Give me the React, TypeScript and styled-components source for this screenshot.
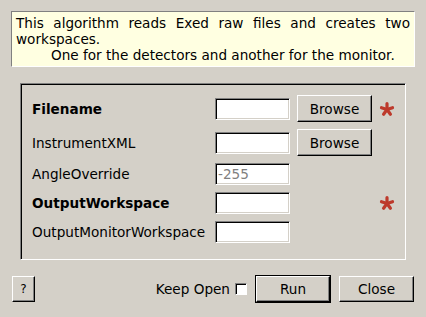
import styled, { createGlobalStyle, css } from 'styled-components'

const GlobalStyle = createGlobalStyle`
    html, body {
        margin: 0;
        padding: 0;
        background: #d4d0c8;
    }
    body {
        font-family: "DejaVu Sans", "Liberation Sans", sans-serif;
        font-size: 13.6px;
        color: #000;
    }
`

const Dialog = styled.div`
    width: 426px;
    height: 317px;
    box-sizing: border-box;
    padding-top: 11px;
    display: flex;
    flex-direction: column;
`

const Description = styled.div`
    margin: 0 11px;
    background: #ffffe1;
    border: 1px solid;
    border-color: #808080 #ffffff #ffffff #808080;
    padding: 3px 4px 3px 4px;
    line-height: 16px;
`

const Justified = styled.p`
    margin: 0;
    text-align: justify;
`

const Indented = styled.p`
    margin: 0;
    text-indent: 35px;
    white-space: nowrap;
`

const GroupBox = styled.div`
    margin: 16px 20px 0;
    border: 1px solid;
    border-color: #808080 #ffffff #ffffff #808080;
    box-shadow: inset 1px 1px 0 #000;
    padding: 11px 10px 16px 11px;
    display: grid;
    grid-template-columns: minmax(0, 1fr) 75px 75px 16px;
    column-gap: 7px;
    row-gap: 7px;
    align-items: center;
`

const Label = styled.div<{ $bold?: boolean }>`
    font-weight: ${p => (p.$bold ? 'bold' : 'normal')};
    white-space: nowrap;
    grid-column: 1;
`

const Field = styled.input`
    grid-column: 2;
    box-sizing: border-box;
    width: 75px;
    height: 22px;
    margin: 0;
    border: 1px solid;
    border-color: #808080 #ffffff #ffffff #808080;
    box-shadow: inset 1px 1px 0 #000, inset -1px -1px 0 #d4d0c8;
    background: #fff;
    font: inherit;
    padding: 0 2px;
    outline: none;

    &::placeholder {
        color: #808080;
    }
`

const buttonLook = css`
    box-sizing: border-box;
    margin: 0;
    background: #d4d0c8;
    border: 1px solid;
    border-color: #ffffff #000000 #000000 #ffffff;
    box-shadow: inset -1px -1px 0 #808080;
    font: inherit;
    color: #000;
    padding: 0;
    cursor: pointer;
`

const BrowseButton = styled.button`
    ${buttonLook};
    grid-column: 3;
    width: 75px;
    height: 27px;
`

const Required = styled.div`
    grid-column: 4;
    display: flex;
    align-items: center;
    justify-content: center;
`

const Footer = styled.div`
    margin-top: 16px;
    padding: 0 12px;
    display: flex;
    align-items: center;
`

const HelpButton = styled.button`
    ${buttonLook};
    width: 23px;
    height: 26px;
    font-size: 12px;
`

const KeepOpen = styled.label`
    margin-left: auto;
    display: flex;
    align-items: center;
    gap: 5px;
    margin-right: 8px;
`

const Check = styled.input`
    appearance: none;
    margin: 0;
    width: 12px;
    height: 12px;
    box-sizing: border-box;
    background: #fff;
    border: 1px solid;
    border-color: #808080 #ffffff #ffffff #808080;
    box-shadow: inset 1px 1px 0 #000;
`

const ActionButton = styled.button<{ $default?: boolean }>`
    ${buttonLook};
    width: ${p => (p.$default ? '74px' : '75px')};
    height: 26px;
    ${p => p.$default && css`
        outline: 1px solid #000;
        margin-left: 1px;
        margin-right: 9px;
    `}
`

function Star() {
    const arms = [-90, -18, 54, 126, 198]
    return (
        <svg width="16" height="16" viewBox="0 0 16 16">
            {arms.map(a => {
                const r = (a * Math.PI) / 180
                return (
                    <line
                        key={a}
                        x1="8"
                        y1="8.5"
                        x2={8 + Math.cos(r) * 5.8}
                        y2={8.5 + Math.sin(r) * 5.8}
                        stroke="#bd3a2c"
                        strokeWidth="3.2"
                        strokeLinecap="round"
                    />
                )
            })}
        </svg>
    )
}

interface Property {
    name: string
    bold?: boolean
    browse?: boolean
    required?: boolean
    placeholder?: string
}

const PROPERTIES: Property[] = [
    { name: 'Filename', bold: true, browse: true, required: true },
    { name: 'InstrumentXML', browse: true },
    { name: 'AngleOverride', placeholder: '-255' },
    { name: 'OutputWorkspace', bold: true, required: true },
    { name: 'OutputMonitorWorkspace' },
]

export default function App() {
    return (
        <>
            <GlobalStyle />
            <Dialog>
                <Description>
                    <Justified>This algorithm reads Exed raw files and creates two workspaces.</Justified>
                    <Indented>One for the detectors and another for the monitor.</Indented>
                </Description>
                <GroupBox>
                    {PROPERTIES.map(p => (
                        <Row key={p.name} {...p} />
                    ))}
                </GroupBox>
                <Footer>
                    <HelpButton>?</HelpButton>
                    <KeepOpen>
                        Keep Open
                        <Check type="checkbox" />
                    </KeepOpen>
                    <ActionButton $default>Run</ActionButton>
                    <ActionButton>Close</ActionButton>
                </Footer>
            </Dialog>
        </>
    )
}

function Row({ name, bold, browse, required, placeholder }: Property) {
    return (
        <>
            <Label $bold={bold}>{name}</Label>
            <Field placeholder={placeholder} />
            {browse ? <BrowseButton>Browse</BrowseButton> : <span />}
            <Required>{required && <Star />}</Required>
        </>
    )
}
